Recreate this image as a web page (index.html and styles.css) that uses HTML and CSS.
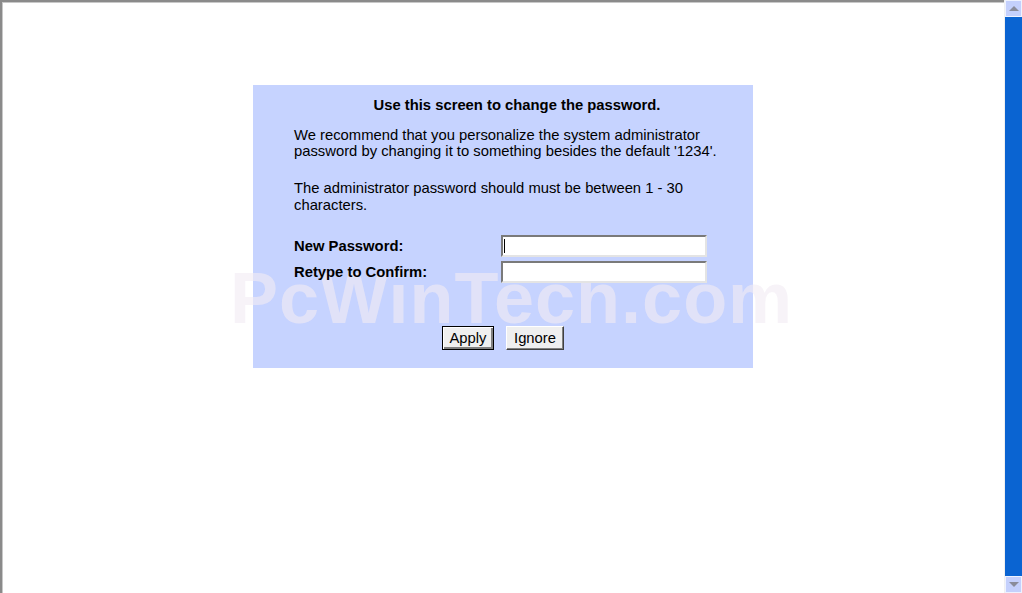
FILE: index.html
```html
<!DOCTYPE html>
<html lang="en">
<head>
    <meta charset="UTF-8">
    <title>Change Password</title>
    <link rel="stylesheet" href="styles.css">
</head>
<body>
    <div class="window">
        <div class="viewport">
            <form class="panel">
                <div class="content">
                    <h1 class="title">Use this screen to change the password.</h1>
                    <p>We recommend that you personalize the system administrator password by changing it to something besides the default '1234'.</p>
                    <p>The administrator password should must be between 1 - 30 characters.</p>

                    <div class="fields">
                        <label for="pw1">New Password:</label>
                        <input type="password" id="pw1" class="field caret">
                        <label for="pw2">Retype to Confirm:</label>
                        <input type="password" id="pw2" class="field">
                    </div>
                </div>

                <div class="actions">
                    <button type="button" class="btn default">Apply</button>
                    <button type="button" class="btn ignore">Ignore</button>
                </div>
            </form>
        </div>

        <div class="scrollbar">
            <div class="arrow up"><span></span></div>
            <div class="track"></div>
            <div class="arrow down"><span></span></div>
        </div>

        <div class="watermark">PcWinTech.com</div>
    </div>
</body>
</html>
```

FILE: styles.css
```css
body {
    margin: 0;
    background-color: #fff;
    font-family: "Liberation Sans", Arial, sans-serif;
    font-size: 14.8px;
    color: #000;
}

.window {
    position: relative;
    display: flex;
    width: 1022px;
    height: 593px;
    overflow: hidden;
}

.viewport {
    flex: 1;
    border-top: 2px solid #8a8a8a;
    border-left: 2px solid #8a8a8a;
    box-shadow: inset 1px 1px 0 #c8c8c8;
}

.panel {
    width: 500px;
    height: 283px;
    margin: 83px auto 0;
    background-color: #c6d3ff;
    padding-top: 12px;
    box-sizing: border-box;
}

.content {
    position: relative;
    z-index: 1;
    width: 446px;
    margin-left: 41px;
}

.title {
    font-size: 14.8px;
    font-weight: bold;
    line-height: 16px;
    text-align: center;
    margin: 0 0 14px;
}

.content p {
    margin: 0 0 21px;
    line-height: 16px;
}

.content p + p {
    line-height: 17px;
}

.fields {
    display: grid;
    grid-template-columns: 207px 206px;
    row-gap: 4px;
    align-items: center;
    margin-top: 21px;
}

.fields label {
    font-weight: bold;
}

.field {
    width: 206px;
    height: 22px;
    box-sizing: border-box;
    margin: 0;
    padding: 0 3px;
    border: 2px solid;
    border-color: #7a7a7a #e4e4e4 #e4e4e4 #7a7a7a;
    background-color: #fff;
    outline: none;
}

.field.caret {
    background-image: linear-gradient(#000, #000);
    background-size: 1px 14px;
    background-position: 1px center;
    background-repeat: no-repeat;
}

.actions {
    position: relative;
    z-index: 1;
    display: flex;
    justify-content: center;
    gap: 12px;
    margin-top: 43px;
}

.btn {
    height: 24px;
    padding: 0;
    font-family: "Liberation Sans", Arial, sans-serif;
    font-size: 14.8px;
    color: #000;
    background-color: #efefef;
    border: 1px solid;
    border-color: #fff #404040 #404040 #fff;
    box-shadow: inset -1px -1px 0 #808080;
}

.btn.default {
    width: 52px;
    border-color: #000;
    box-shadow: inset 1px 1px 0 #fff, inset -2px -2px 0 #808080;
}

.btn.ignore {
    width: 58px;
}

.scrollbar {
    width: 17px;
    display: flex;
    flex-direction: column;
    border-left: 1px solid #f0f0f0;
}

.track {
    flex: 1;
    background-color: #0a64d2;
}

.arrow {
    height: 17px;
    background-color: #c4d0fc;
    border: 1px solid #eef2ff;
    box-sizing: border-box;
    display: flex;
    align-items: center;
    justify-content: center;
}

.arrow span {
    width: 0;
    height: 0;
    border-left: 5px solid transparent;
    border-right: 5px solid transparent;
}

.arrow.up span {
    border-bottom: 5px solid #8a8c9a;
}

.arrow.down span {
    border-top: 5px solid #8a8c9a;
}

.watermark {
    position: absolute;
    z-index: 0;
    left: 230px;
    top: 262px;
    font-size: 72px;
    font-weight: bold;
    line-height: 72px;
    letter-spacing: 1px;
    color: rgba(242, 236, 244, 0.62);
    pointer-events: none;
    white-space: nowrap;
}
```
